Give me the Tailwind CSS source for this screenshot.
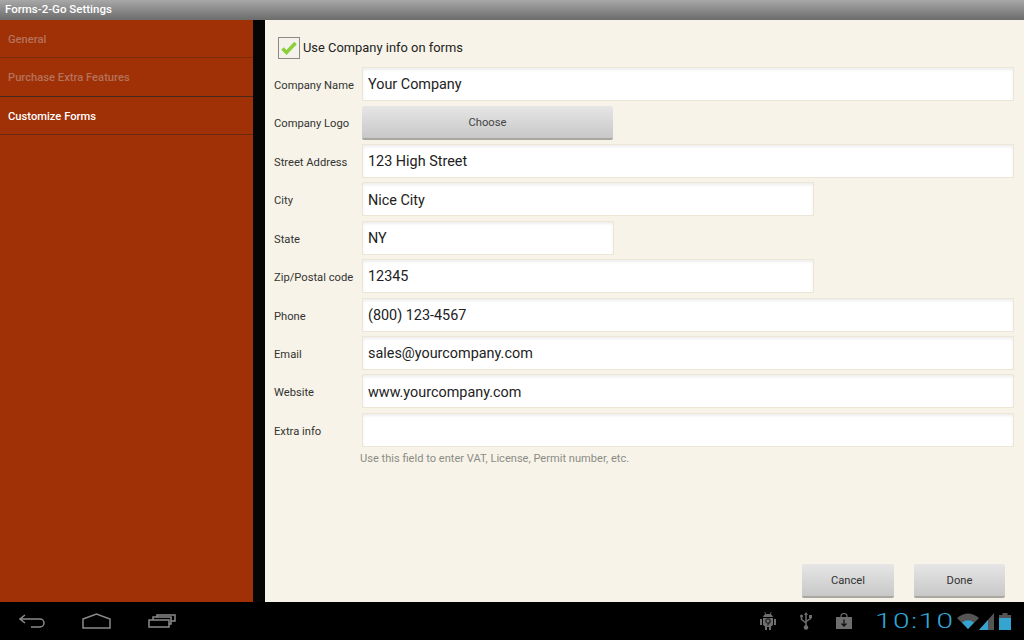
<!DOCTYPE html>
<html lang="en">
<head>
  <meta charset="UTF-8" />
  <title>Forms-2-Go Settings</title>
  <script src="https://cdn.jsdelivr.net/npm/@tailwindcss/browser@4"></script>
</head>
<body class="w-[1024px] h-[640px] overflow-hidden flex flex-col bg-black font-['Roboto',sans-serif]">

  <!-- Title bar -->
  <div class="h-5 shrink-0 flex items-center pl-[5px] bg-gradient-to-b from-[#a8a8a8] to-[#6c6c6c] text-white text-[11.500px] font-medium">Forms-2-Go Settings</div>

  <div class="h-[582px] shrink-0 flex">
    <!-- Sidebar -->
    <div class="w-[253px] shrink-0 bg-[#a03006] text-[11.200px] font-medium">
      <div class="h-[38.400px] flex items-center pl-2 pt-[4px] text-[#b5725a] border-b border-[#7c2a0c]">General</div>
      <div class="h-[38.400px] flex items-center pl-2 pt-[2px] text-[#b5725a] border-b border-[#46281c]">Purchase Extra Features</div>
      <div class="h-[38.400px] flex items-center pl-2 pt-[4px] text-white border-b border-[#6a2a12]">Customize Forms</div>
    </div>
    <div class="w-3 shrink-0 bg-[#050505]"></div>

    <!-- Form -->
    <div class="flex-1 flex flex-col bg-[#f7f3e8] pl-[9px] pr-[10px] text-[#333]">
      <div class="h-[45px] shrink-0 flex items-center pl-[4px] pt-[10px] gap-[3px] text-[12.900px] text-[#222]">
        <div class="w-[22px] h-[22px] border border-[#8a8a80] bg-[#f4f2ea] flex items-center justify-center">
          <svg width="18" height="16" viewBox="0 0 18 16"><path d="M2.500 8.500l4 4L15.500 3" fill="none" stroke="#8ccf3a" stroke-width="3.500"/></svg>
        </div>
        Use Company info on forms
      </div>

      <div class="h-[38.400px] shrink-0 flex items-center text-[11.200px]">
        <div class="w-[88px] shrink-0 pt-[5px]">Company Name</div>
        <div class="flex-1 h-[34px] flex items-center pl-[5px] pt-[2px] text-[14.400px] text-[#222] bg-white border border-[#ece6d6] shadow-[inset_0_2px_3px_#eee]">Your Company</div>
      </div>
      <div class="h-[38.400px] shrink-0 flex items-center text-[11.200px]">
        <div class="w-[88px] shrink-0 pt-[4px]">Company Logo</div>
        <div class="w-[251px] h-[34px] flex items-center justify-center pt-[4px] rounded-[2px] text-[#444] bg-gradient-to-b from-[#e6e6e6] to-[#c8c8c8] border-b-2 border-[#a8a8a0]">Choose</div>
      </div>
      <div class="h-[38.400px] shrink-0 flex items-center text-[11.200px]">
        <div class="w-[88px] shrink-0 pt-[5px]">Street Address</div>
        <div class="flex-1 h-[34px] flex items-center pl-[5px] pt-[2px] text-[14.400px] text-[#222] bg-white border border-[#ece6d6] shadow-[inset_0_2px_3px_#eee]">123 High Street</div>
      </div>
      <div class="h-[38.400px] shrink-0 flex items-center text-[11.200px]">
        <div class="w-[88px] shrink-0 pt-[5px]">City</div>
        <div class="w-[452px] h-[34px] flex items-center pl-[5px] pt-[2px] text-[14.400px] text-[#222] bg-white border border-[#ece6d6] shadow-[inset_0_2px_3px_#eee]">Nice City</div>
      </div>
      <div class="h-[38.400px] shrink-0 flex items-center text-[11.200px]">
        <div class="w-[88px] shrink-0 pt-[5px]">State</div>
        <div class="w-[252px] h-[34px] flex items-center pl-[5px] pt-[2px] text-[14.400px] text-[#222] bg-white border border-[#ece6d6] shadow-[inset_0_2px_3px_#eee]">NY</div>
      </div>
      <div class="h-[38.400px] shrink-0 flex items-center text-[11.200px]">
        <div class="w-[88px] shrink-0 pt-[5px]">Zip/Postal code</div>
        <div class="w-[452px] h-[34px] flex items-center pl-[5px] pt-[2px] text-[14.400px] text-[#222] bg-white border border-[#ece6d6] shadow-[inset_0_2px_3px_#eee]">12345</div>
      </div>
      <div class="h-[38.400px] shrink-0 flex items-center text-[11.200px]">
        <div class="w-[88px] shrink-0 pt-[5px]">Phone</div>
        <div class="flex-1 h-[34px] flex items-center pl-[5px] pt-[2px] text-[14.400px] text-[#222] bg-white border border-[#ece6d6] shadow-[inset_0_2px_3px_#eee]">(800) 123-4567</div>
      </div>
      <div class="h-[38.400px] shrink-0 flex items-center text-[11.200px]">
        <div class="w-[88px] shrink-0 pt-[5px]">Email</div>
        <div class="flex-1 h-[34px] flex items-center pl-[5px] pt-[2px] text-[14.400px] text-[#222] bg-white border border-[#ece6d6] shadow-[inset_0_2px_3px_#eee]">sales@yourcompany.com</div>
      </div>
      <div class="h-[38.400px] shrink-0 flex items-center text-[11.200px]">
        <div class="w-[88px] shrink-0 pt-[5px]">Website</div>
        <div class="flex-1 h-[34px] flex items-center pl-[5px] pt-[2px] text-[14.400px] text-[#222] bg-white border border-[#ece6d6] shadow-[inset_0_2px_3px_#eee]">www.yourcompany.com</div>
      </div>
      <div class="h-[38.400px] shrink-0 flex items-center text-[11.200px]">
        <div class="w-[88px] shrink-0 pt-[5px]">Extra info</div>
        <div class="flex-1 h-[34px] bg-white border border-[#ece6d6] shadow-[inset_0_2px_3px_#eee]"></div>
      </div>
      <div class="pl-[86px] pt-[2px] text-[11.100px] text-[#8c8c86]">Use this field to enter VAT, License, Permit number, etc.</div>

      <div class="mt-auto mb-[4px] flex justify-end gap-[20px] pr-[9px] text-[11.200px] text-[#333]">
        <div class="w-[92px] h-[34px] flex items-center justify-center pt-[2px] rounded-[2px] bg-gradient-to-b from-[#e6e6e6] to-[#c8c8c8] border-b-2 border-[#a8a8a0]">Cancel</div>
        <div class="w-[91px] h-[34px] flex items-center justify-center pt-[2px] rounded-[2px] bg-gradient-to-b from-[#e6e6e6] to-[#c8c8c8] border-b-2 border-[#a8a8a0]">Done</div>
      </div>
    </div>
  </div>

  <!-- System bar -->
  <div class="flex-1 flex items-center bg-black">
    <div class="flex items-center pl-[19px] gap-[37px]">
      <svg width="26" height="14" viewBox="0 0 26 14" fill="none" stroke="#8a8a8a" stroke-width="1.500"><path d="M6 1L1 5l5 4M1.500 5H21a3.800 3.800 0 0 1 0 8h-9"/></svg>
      <svg width="29" height="16" viewBox="0 0 29 16" fill="none" stroke="#8a8a8a" stroke-width="1.500"><path d="M1 6L14.500 1 28 6v9H1z"/></svg>
      <svg width="28" height="14" viewBox="0 0 28 14" fill="none" stroke="#8a8a8a" stroke-width="1.500"><path d="M1 6h20v7H1zM5 6V3h18v7h-2M9 3V1h18v6h-4"/></svg>
    </div>
    <div class="ml-auto flex items-center mr-[13px]">
      <!-- Notification icons -->
      <svg width="16" height="18" viewBox="0 0 16 18" class="mr-[24px]"><path d="M5 0l1.200 2h3.600L11 0l.6.400L10.700 2.300C12 3 12.800 4 13 5H3c.2-1 1-2 2.300-2.700L4.400.4z" fill="#6e6e6e"/><path d="M3 6h10v7l-2 1.500V18H9v-3H7v3H5v-3.500L3 13z" fill="#6e6e6e"/><path d="M0 7h2v6H0zM14 7h2v6h-2z" fill="#6e6e6e"/><circle cx="8" cy="9" r="2.200" fill="none" stroke="#222" stroke-width="1.200"/><path d="M9.800 10l-2.300 3.500" stroke="#222" stroke-width="1.200"/></svg>
      <svg width="12" height="18" viewBox="0 0 12 18" fill="none" stroke="#6e6e6e" stroke-width="1.500" class="mr-[24px]"><path d="M6 3v12M1.500 5v2.500L6 11M10.500 5v1.500L6 9.500"/><path d="M6 0l2 3H4z" fill="#6e6e6e" stroke="none"/><circle cx="6" cy="15.500" r="2.300" fill="#6e6e6e" stroke="none"/><circle cx="1.500" cy="4" r="1.500" fill="#6e6e6e" stroke="none"/><path d="M9 3h3v3H9z" fill="#6e6e6e" stroke="none"/></svg>
      <svg width="16" height="16" viewBox="0 0 16 16" class="mr-[23px]"><path d="M0 4h16v12H0z" fill="#6e6e6e"/><path d="M5 4V3a3 2.500 0 0 1 6 0v1" fill="none" stroke="#6e6e6e" stroke-width="1.200"/><path d="M8 6.500v6M5.500 10.500L8 13l2.500-2.500" fill="none" stroke="#111" stroke-width="1.300"/></svg>
      <div class="w-[78px] mr-[4px]">
        <div class="w-[58px] origin-left scale-x-[1.420] text-[21px] leading-none font-light text-[#2fa9d8] tracking-[1px] whitespace-nowrap">10:10</div>
      </div>
      <!-- Wifi, signal, battery -->
      <svg width="22" height="16" viewBox="0 0 22 16"><path d="M0 5Q11-4 22 5L11 16z" fill="#555"/><path d="M5 9.500Q11 5 17 9.500L11 16z" fill="#33a5d0"/></svg>
      <svg width="15" height="17" viewBox="0 0 15 17" class="mr-[5px]"><path d="M15 0v17H0z" fill="#555"/><path d="M9 7v10H0z" fill="#33a5d0"/></svg>
      <svg width="12" height="17" viewBox="0 0 12 17"><path d="M3.500 0h5v2H12v15H0V2h3.500z" fill="#555"/><path d="M0 5h12v12H0z" fill="#33a5d0"/></svg>
    </div>
  </div>

</body>
</html>
